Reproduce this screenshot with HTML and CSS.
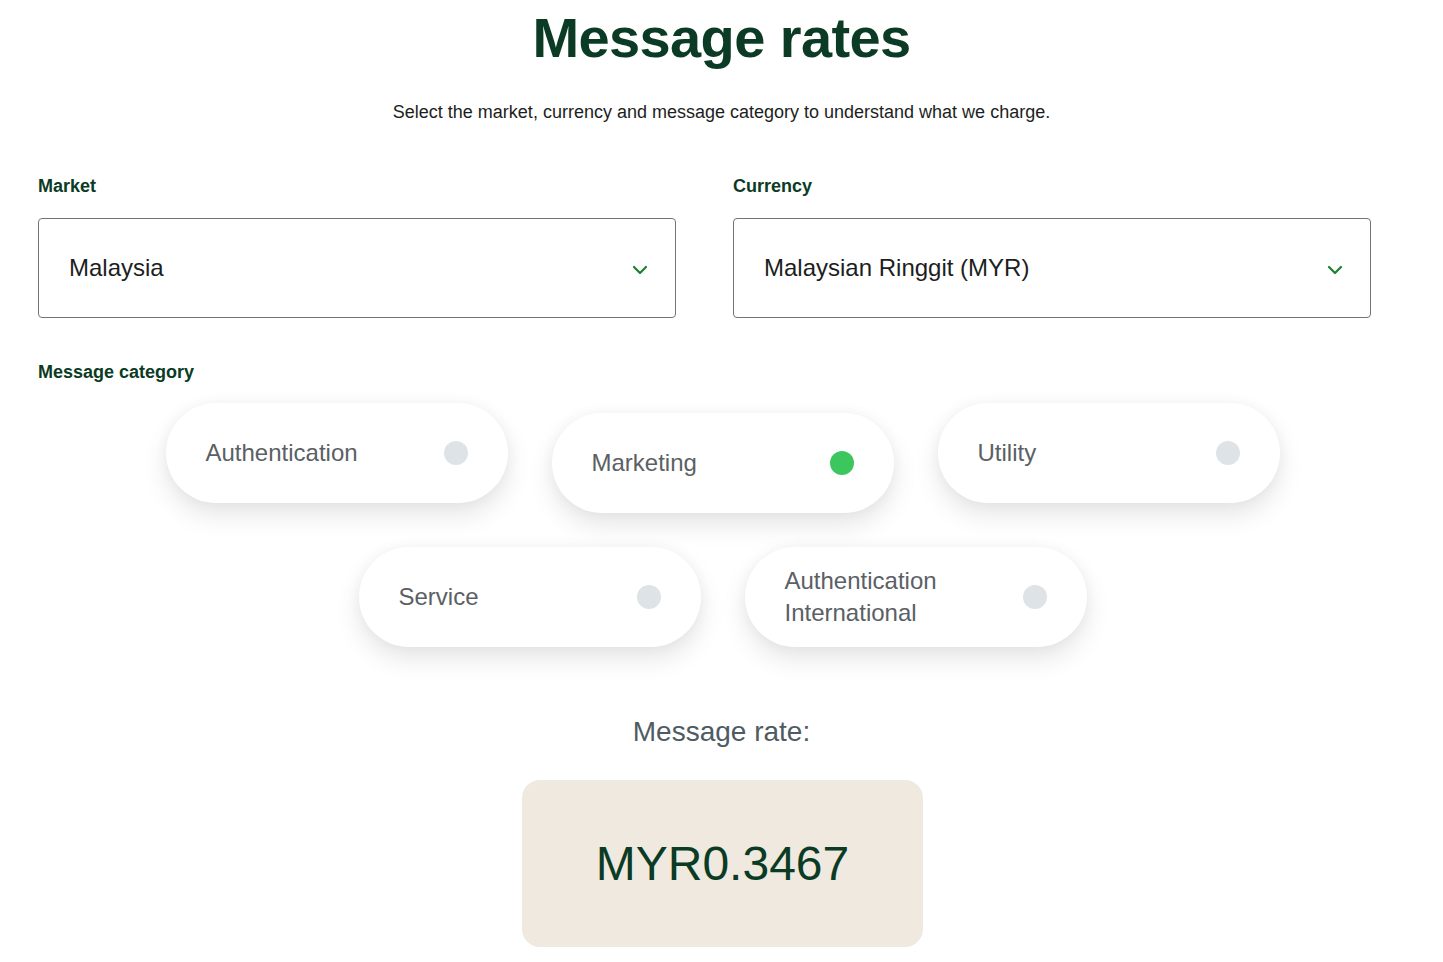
FILE: index.html
```html
<!DOCTYPE html>
<html lang="en">
<head>
    <meta charset="UTF-8">
    <meta name="viewport" content="width=device-width, initial-scale=1.0">
    <title>Message rates</title>
    <link rel="stylesheet" href="styles.css">
</head>
<body>
    <main class="rates">
        <h1 class="rates-title">Message rates</h1>
        <p class="rates-intro">Select the market, currency and message category to understand what we charge.</p>

        <div class="fields">
            <div class="field">
                <div class="field-label">Market</div>
                <div class="dropdown">
                    <span>Malaysia</span>
                    <svg class="chevron" width="16" height="10" viewBox="0 0 16 10"><path d="M2 2l6 6 6-6" fill="none" stroke="#1d7f30" stroke-width="2.2" stroke-linecap="round" stroke-linejoin="round"/></svg>
                </div>
            </div>
            <div class="field">
                <div class="field-label">Currency</div>
                <div class="dropdown">
                    <span>Malaysian Ringgit (MYR)</span>
                    <svg class="chevron" width="16" height="10" viewBox="0 0 16 10"><path d="M2 2l6 6 6-6" fill="none" stroke="#1d7f30" stroke-width="2.2" stroke-linecap="round" stroke-linejoin="round"/></svg>
                </div>
            </div>
        </div>

        <div class="field-label category-label">Message category</div>
        <div class="categories">
            <div class="pill"><span class="pill-text">Authentication</span><span class="dot"></span></div>
            <div class="pill active"><span class="pill-text">Marketing</span><span class="dot"></span></div>
            <div class="pill"><span class="pill-text">Utility</span><span class="dot"></span></div>
            <div class="pill"><span class="pill-text">Service</span><span class="dot"></span></div>
            <div class="pill"><span class="pill-text">Authentication International</span><span class="dot"></span></div>
        </div>

        <div class="rate-label">Message rate:</div>
        <div class="rate-box">MYR0.3467</div>
    </main>
</body>
</html>
```

FILE: styles.css
```css
* {
    margin: 0;
    padding: 0;
    box-sizing: border-box;
    font-family: 'Liberation Sans', Arial, sans-serif;
}

body {
    background: #fff;
    color: #1c1e21;
}

.rates {
    width: 100%;
    padding-top: 4px;
    padding-bottom: 20px;
}

.rates-title {
    text-align: center;
    font-size: 56px;
    line-height: 67px;
    font-weight: bold;
    letter-spacing: -0.6px;
    color: #0b3b24;
}

.rates-intro {
    margin-top: 29px;
    text-align: center;
    font-size: 18px;
    line-height: 24px;
    color: #1c1e21;
}

.fields {
    display: grid;
    grid-template-columns: 638px 638px;
    column-gap: 57px;
    padding-left: 38px;
    margin-top: 52px;
}

.field-label {
    font-size: 18px;
    line-height: 20px;
    font-weight: bold;
    color: #0b3b24;
}

.dropdown {
    margin-top: 22px;
    height: 100px;
    border: 1px solid #747474;
    border-radius: 4px;
    display: flex;
    align-items: center;
    justify-content: space-between;
    padding: 0 27px 0 30px;
    font-size: 24px;
    color: #1c1e21;
}

.chevron {
    margin-top: 4px;
}

.category-label {
    margin-top: 44px;
    margin-left: 38px;
}

.categories {
    width: 1116px;
    margin: 21px auto 0;
    padding-left: 2px;
    display: flex;
    flex-wrap: wrap;
    justify-content: center;
    gap: 44px;
}

.pill {
    width: 342px;
    height: 100px;
    border-radius: 50px;
    background: #fff;
    box-shadow: 0 12px 26px rgba(0, 0, 0, 0.10), 0 0 14px rgba(0, 0, 0, 0.04);
    display: flex;
    align-items: center;
    justify-content: space-between;
    padding: 0 40px;
    gap: 16px;
}

.pill.active {
    transform: translateY(10px);
}

.pill-text {
    font-size: 24px;
    line-height: 32px;
    color: #5b6064;
}

.dot {
    flex: none;
    width: 24px;
    height: 24px;
    border-radius: 50%;
    background: #dde3e6;
}

.pill.active .dot {
    background: #3cc65e;
}

.rate-label {
    margin-top: 68px;
    text-align: center;
    font-size: 28px;
    line-height: 34px;
    color: #4f5b62;
}

.rate-box {
    width: 401px;
    height: 167px;
    margin: 31px auto 0;
    transform: translateX(1px);
    background: #f0e9df;
    border-radius: 18px;
    display: flex;
    align-items: center;
    justify-content: center;
    font-size: 48px;
    color: #0b3b24;
}
```
